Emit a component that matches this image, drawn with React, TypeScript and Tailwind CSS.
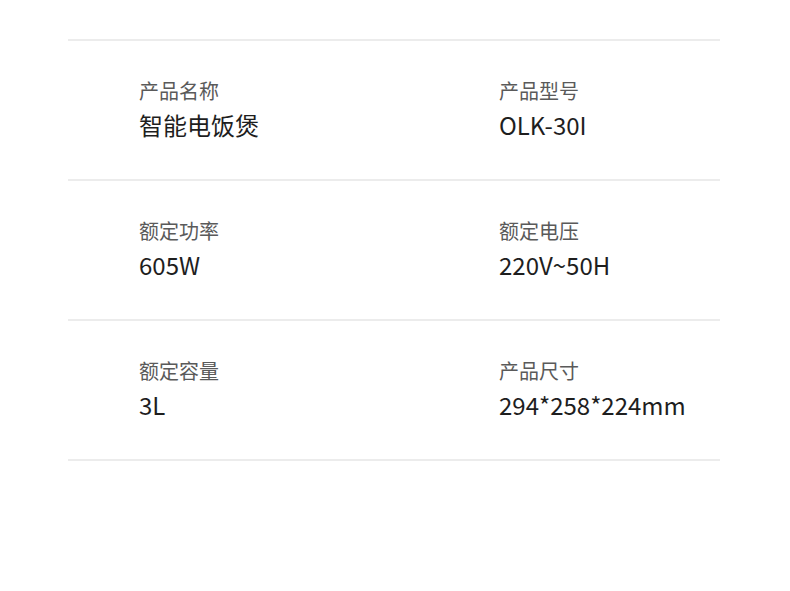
import React from 'react';

type Spec = { label: string; value: string };

const ROWS: [Spec, Spec][] = [
  [
    { label: '产品名称', value: '智能电饭煲' },
    { label: '产品型号', value: 'OLK-30I' },
  ],
  [
    { label: '额定功率', value: '605W' },
    { label: '额定电压', value: '220V~50H' },
  ],
  [
    { label: '额定容量', value: '3L' },
    { label: '产品尺寸', value: '294*258*224mm' },
  ],
];

function Cell({ spec }: { spec: Spec }) {
  return (
    <div className="flex flex-col">
      <span className="text-[20px] leading-[26px] text-[#5a5a5a]">{spec.label}</span>
      <span className="mt-[6px] text-[24px] leading-[30px] text-[#1e1e1e]">{spec.value}</span>
    </div>
  );
}

export default function App() {
  return (
    <div
      className="h-[591px] w-[790px] bg-white pt-[39px]"
      style={{ fontFamily: '"Noto Sans CJK SC", "Noto Sans", sans-serif' }}
    >
      <div className="ml-[68px] w-[652px]">
        <div className="h-[2px] bg-[#ececec]" />
        {ROWS.map(([a, b], i) => (
          <div key={i}>
            <div className="grid h-[138px] grid-cols-[360px_1fr] pl-[71px] pt-[37px]">
              <Cell spec={a} />
              <Cell spec={b} />
            </div>
            <div className="h-[2px] bg-[#ececec]" />
          </div>
        ))}
      </div>
    </div>
  );
}
